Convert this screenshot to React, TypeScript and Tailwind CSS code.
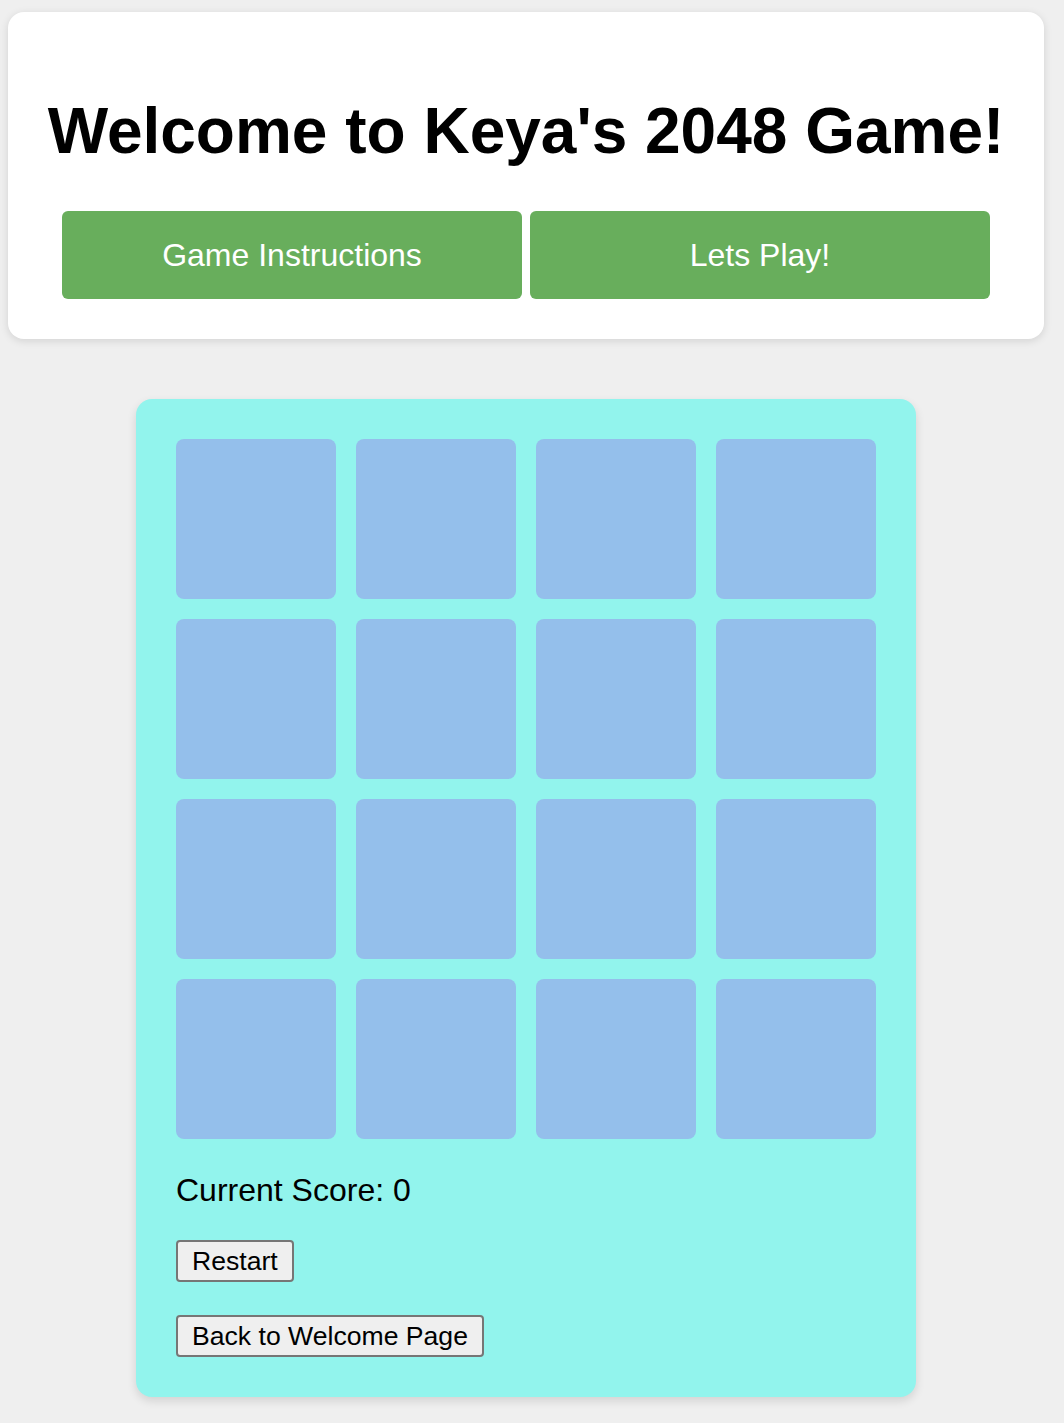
import { useState } from "react";

const SIZE = 4;

function emptyBoard(): number[][] {
  return Array.from({ length: SIZE }, () => Array(SIZE).fill(0));
}

export default function App() {
  const [board, setBoard] = useState<number[][]>(emptyBoard);
  const [score, setScore] = useState(0);

  const restart = () => {
    setBoard(emptyBoard());
    setScore(0);
  };

  return (
    <div className="min-h-[1423px] bg-[#efefef] pt-3 pb-6 font-['Liberation_Sans',Arial,sans-serif] text-black">
      {/* welcome card */}
      <div className="ml-2 mr-5 rounded-2xl bg-white pt-[83px] pb-10 shadow-[0_2px_8px_rgba(0,0,0,0.12)]">
        <h1 className="text-center text-[64px] font-bold leading-[1.15]">
          Welcome to Keya's 2048 Game!
        </h1>
        <div className="mt-[42px] flex justify-center gap-2">
          <button className="h-[88px] w-[460px] rounded-md bg-[#68ae5c] text-[32px] text-white">
            Game Instructions
          </button>
          <button className="h-[88px] w-[460px] rounded-md bg-[#68ae5c] text-[32px] text-white">
            Lets Play!
          </button>
        </div>
      </div>

      {/* game board */}
      <div className="mt-[60px] ml-[136px] w-[780px] rounded-2xl bg-[#92f4ed] p-10 shadow-[0_4px_10px_rgba(0,0,0,0.12)]">
        <div className="grid grid-cols-4 gap-5">
          {board.flat().map((v, i) => (
            <div
              key={i}
              className="flex h-[160px] w-[160px] items-center justify-center rounded-lg bg-[#94bfeb] text-4xl font-bold"
            >
              {v || ""}
            </div>
          ))}
        </div>
        <p className="mt-[33px] text-[32px] leading-[1.15]">Current Score: {score}</p>
        <div className="mt-[32px] flex">
          <button
            onClick={restart}
            className="h-[42px] rounded-[4px] border-2 border-[#767676] bg-[#efefef] px-[14px] text-[26.6px] leading-none"
          >
            Restart
          </button>
        </div>
        <div className="mt-[33px] flex">
          <button className="h-[42px] rounded-[4px] border-2 border-[#767676] bg-[#efefef] px-[14px] text-[26.6px] leading-none">
            Back to Welcome Page
          </button>
        </div>
      </div>
    </div>
  );
}
